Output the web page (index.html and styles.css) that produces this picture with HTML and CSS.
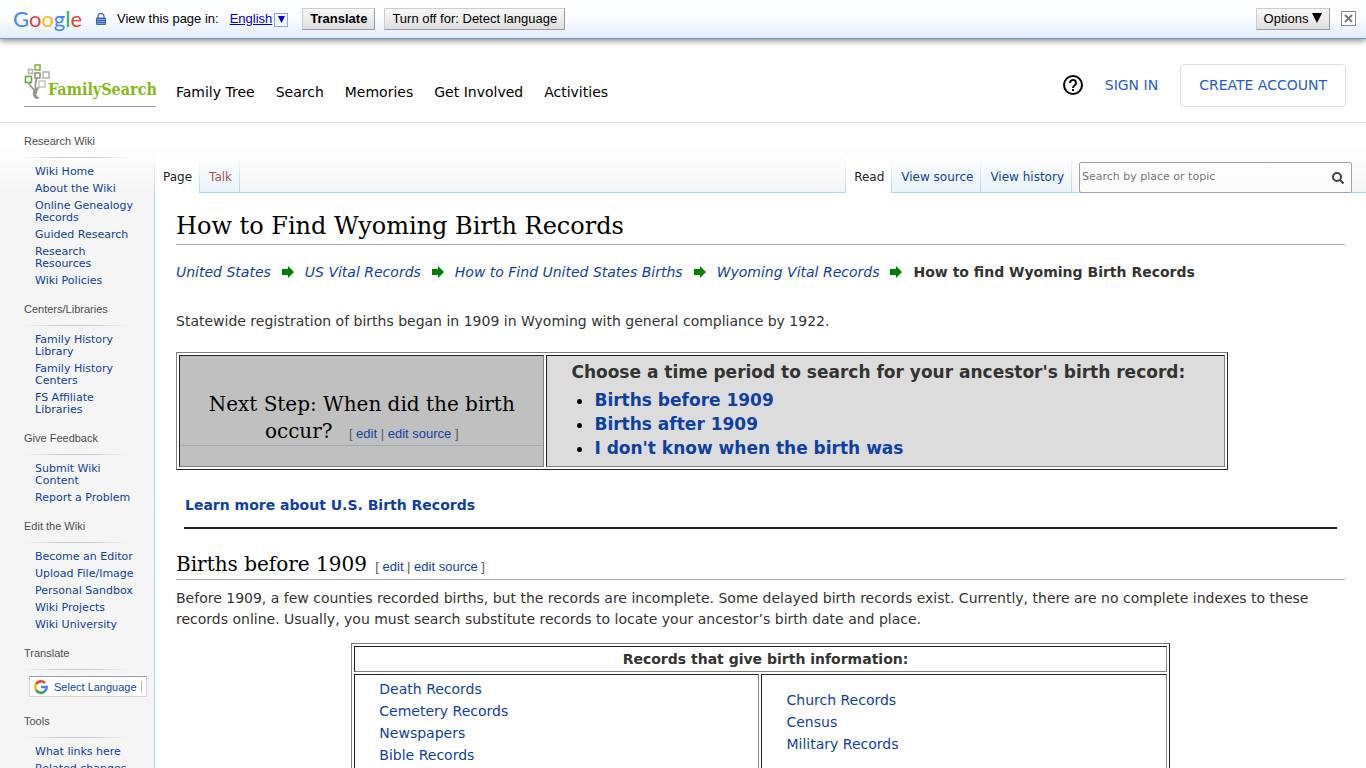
FILE: index.html
```html
<!DOCTYPE html>
<html lang="en">
<head>
    <meta charset="UTF-8">
    <meta name="viewport" content="width=device-width, initial-scale=1.0">
    <title>How to Find Wyoming Birth Records - FamilySearch Wiki</title>
    <link rel="stylesheet" href="styles.css">
</head>
<body>
    <!-- Translate toolbar -->
    <div class="translate-bar">
        <span class="google"><span class="g-blue">G</span><span class="g-red">o</span><span class="g-yellow">o</span><span class="g-blue">g</span><span class="g-green">l</span><span class="g-red">e</span></span>
        <svg class="lock" width="10" height="12" viewBox="0 0 10 12"><path d="M2 5V3.500a3 3 0 0 1 6 0V5" fill="none" stroke="#5b7db8" stroke-width="1.500"/><rect y="4.500" width="10" height="7.500" rx="1" fill="#3c68b0"/><path d="M1 6.500h8M1 8.500h8M1 10.500h8" stroke="#8fb0e0" stroke-width=".8"/></svg>
        <span class="view-label">View this page in:</span>
        <a class="language" href="#">English</a>
        <button class="language-arrow" aria-label="Choose language"><svg width="7" height="7" viewBox="0 0 7 7"><path d="M0 0h7L3.500 7z" fill="#0000cc"/></svg></button>
        <button class="bar-button translate">Translate</button>
        <button class="bar-button">Turn off for: Detect language</button>
        <button class="bar-button options">Options <svg width="10" height="10" viewBox="0 0 10 10"><path d="M0 0h10L5 10z" fill="#000"/></svg></button>
        <button class="close" aria-label="Close"><svg width="9" height="9" viewBox="0 0 9 9"><path d="M1 1l7 7M8 1L1 8" stroke="#777" stroke-width="2"/></svg></button>
    </div>

    <div class="header">
        <a class="logo" href="#">
            <svg width="132" height="38" viewBox="0 0 132 38" role="img" aria-label="FamilySearch">
                <g fill="none" stroke-width="1.600">
                    <path d="M5 19c0 4 6 5 6.500 10M13 14c-2 4-2 8-1 12M18 22c-3 0-6 3-6 8" stroke="#97928c" stroke-width="1.800"/>
                    <path d="M10 27c1 3 1 6 5 7h-3c-3-2-3-4-2-7z" fill="#97928c" stroke="#97928c"/>
                    <rect x="11" y="1" width="5" height="5" stroke="#8ab53e"/>
                    <rect x="4.500" y="5.500" width="4" height="4" stroke="#b5b3b0"/>
                    <rect x="11" y="9" width="5" height="5" fill="#fff" stroke="#97928c"/>
                    <rect x="19" y="8" width="6" height="6" stroke="#b5b3b0"/>
                    <rect x="1.500" y="12.500" width="6" height="6" fill="#fff" stroke="#6da544"/>
                    <rect x="15" y="17" width="6" height="6" fill="#fff" stroke="#c9c7c5"/>
                </g>
                <text x="24" y="31" class="logo-text">FamilySearch</text>
            </svg>
        </a>
        <nav class="main-nav">
            <a href="#">Family Tree</a>
            <a href="#">Search</a>
            <a href="#">Memories</a>
            <a href="#">Get Involved</a>
            <a href="#">Activities</a>
        </nav>
        <div class="account">
            <button class="help" aria-label="Help"><svg width="20" height="20" viewBox="0 0 20 20"><circle cx="10" cy="10" r="9" fill="none" stroke="#000" stroke-width="2"/><path d="M7 8a3 3 0 1 1 4.800 2.300C10.700 11.100 10 11.600 10 13" fill="none" stroke="#000" stroke-width="1.900"/><rect x="9" y="14" width="2" height="2"/></svg></button>
            <a class="sign-in" href="#">SIGN IN</a>
            <a class="create" href="#">CREATE ACCOUNT</a>
        </div>
    </div>

    <div class="page">
        <div class="sidebar">
            <h3>Research Wiki</h3>
            <ul>
                <li><a href="#">Wiki Home</a></li>
                <li><a href="#">About the Wiki</a></li>
                <li><a href="#">Online Genealogy Records</a></li>
                <li><a href="#">Guided Research</a></li>
                <li><a href="#">Research<br>Resources</a></li>
                <li><a href="#">Wiki Policies</a></li>
            </ul>
            <h3>Centers/Libraries</h3>
            <ul>
                <li><a href="#">Family History Library</a></li>
                <li><a href="#">Family History Centers</a></li>
                <li><a href="#">FS Affiliate Libraries</a></li>
            </ul>
            <h3>Give Feedback</h3>
            <ul>
                <li><a href="#">Submit Wiki Content</a></li>
                <li><a href="#">Report a Problem</a></li>
            </ul>
            <h3>Edit the Wiki</h3>
            <ul>
                <li><a href="#">Become an Editor</a></li>
                <li><a href="#">Upload File/Image</a></li>
                <li><a href="#">Personal Sandbox</a></li>
                <li><a href="#">Wiki Projects</a></li>
                <li><a href="#">Wiki University</a></li>
            </ul>
            <h3>Translate</h3>
            <a class="select-language" href="#">
                <svg width="14" height="14" viewBox="0 0 14 14" fill="none" stroke-width="2.600"><path d="M2 4.200A5.700 5.700 0 0 1 11 3" stroke="#ea4335"/><path d="M2 9.800A5.700 5.700 0 0 1 2 4.200" stroke="#fbbc05"/><path d="M11 11.100A5.700 5.700 0 0 1 2 9.800" stroke="#34a853"/><path d="M7 7h5.700A5.700 5.700 0 0 1 10.800 11.200" stroke="#4285f4"/></svg>
                <span>Select Language</span>
            </a>
            <h3>Tools</h3>
            <ul>
                <li><a href="#">What links here</a></li>
                <li><a href="#">Related changes</a></li>
            </ul>
        </div>

        <div class="main">
            <div class="tabs">
                <a class="tab active" href="#">Page</a>
                <a class="tab new" href="#">Talk</a>
                <a class="tab active views" href="#">Read</a>
                <a class="tab" href="#">View source</a>
                <a class="tab" href="#">View history</a>
                <form class="search">
                    <input type="search" placeholder="Search by place or topic" aria-label="Search by place or topic">
                    <button type="button" aria-label="Search"><svg width="12" height="12" viewBox="0 0 12 12" fill="none" stroke="#444" stroke-width="2"><circle cx="5" cy="5" r="4"/><path d="M8 8l3.500 3.500"/></svg></button>
                </form>
            </div>

            <div class="content">
                <h1>How to Find Wyoming Birth Records</h1>
                <div class="breadcrumb">
                    <a href="#">United States</a>
                    <svg width="12" height="12" viewBox="0 0 12 12"><path d="M0 3h6V0l6 6-6 6V9H0z" fill="#008000"/></svg>
                    <a href="#">US Vital Records</a>
                    <svg width="12" height="12" viewBox="0 0 12 12"><path d="M0 3h6V0l6 6-6 6V9H0z" fill="#008000"/></svg>
                    <a href="#">How to Find United States Births</a>
                    <svg width="12" height="12" viewBox="0 0 12 12"><path d="M0 3h6V0l6 6-6 6V9H0z" fill="#008000"/></svg>
                    <a href="#">Wyoming Vital Records</a>
                    <svg width="12" height="12" viewBox="0 0 12 12"><path d="M0 3h6V0l6 6-6 6V9H0z" fill="#008000"/></svg>
                    <b>How to find Wyoming Birth Records</b>
                </div>
                <p class="intro">Statewide registration of births began in 1909 in Wyoming with general compliance by 1922.</p>

                <table class="next-step">
                    <tr>
                        <td class="question">
                            <h2>Next Step: When did the birth occur? <span class="edit">[ <a href="#">edit</a> | <a href="#">edit source</a> ]</span></h2>
                        </td>
                        <td class="choices">
                            <b>Choose a time period to search for your ancestor's birth record:</b>
                            <ul>
                                <li><a href="#">Births before 1909</a></li>
                                <li><a href="#">Births after 1909</a></li>
                                <li><a href="#">I don't know when the birth was</a></li>
                            </ul>
                        </td>
                    </tr>
                </table>

                <div class="learn-more"><a href="#">Learn more about U.S. Birth Records</a></div>

                <h2>Births before 1909 <span class="edit">[ <a href="#">edit</a> | <a href="#">edit source</a> ]</span></h2>
                <p>Before 1909, a few counties recorded births, but the records are incomplete. Some delayed birth records exist. Currently, there are no complete indexes to these records online. Usually, you must search substitute records to locate your ancestor’s birth date and place.</p>

                <table class="records">
                    <tr>
                        <th colspan="2">Records that give birth information:</th>
                    </tr>
                    <tr>
                        <td>
                            <ul>
                                <li><a href="#">Death Records</a></li>
                                <li><a href="#">Cemetery Records</a></li>
                                <li><a href="#">Newspapers</a></li>
                                <li><a href="#">Bible Records</a></li>
                            </ul>
                        </td>
                        <td>
                            <ul>
                                <li><a href="#">Church Records</a></li>
                                <li><a href="#">Census</a></li>
                                <li><a href="#">Military Records</a></li>
                            </ul>
                        </td>
                    </tr>
                </table>
            </div>
        </div>
    </div>
</body>
</html>
```
FILE: styles.css
```css
* {
    box-sizing: border-box;
}
html {
    height: 100%;
    overflow: hidden;
}
body {
    height: 100%;
    margin: 0;
    overflow: hidden;
    font-family: Verdana, "DejaVu Sans", sans-serif;
    font-size: 14px;
    color: #333331;
    background: #fff;
}
a {
    color: #0f3fa0;
    text-decoration: none;
}
button {
    cursor: pointer;
}
ul {
    margin: 0;
    padding: 0;
    list-style: none;
}

/* translate toolbar */
.translate-bar {
    display: flex;
    align-items: center;
    height: 39px;
    padding: 0 10px 1px 13px;
    border-bottom: 1px solid #6b90da;
    background: linear-gradient(#fff, #fafcff 50%, #e3ecfa);
    box-shadow: 0 2px 6px rgba(0, 0, 0, 0.45);
    font-family: Arial, "Liberation Sans", sans-serif;
    font-size: 13px;
    color: #000;
}
.google {
    width: 83px;
    font-family: Lato, sans-serif;
    font-size: 22px;
    line-height: 24px;
}
.g-blue { color: #4285f4; }
.g-red { color: #ea4335; }
.g-yellow { color: #fbbc05; }
.g-green { color: #34a853; }
.view-label {
    margin: 0 11px;
}
.language {
    color: #0000cc;
    text-decoration: underline;
}
.language-arrow {
    display: flex;
    align-items: center;
    justify-content: center;
    width: 14px;
    height: 14px;
    margin: 2px 14px 0 2px;
    padding: 0;
    border: 1px solid #8ca6d8;
    background: #f2f6ff;
}
.bar-button {
    height: 22px;
    margin-right: 9px;
    padding: 0 7px;
    border: 1px solid #999;
    border-top-color: #ccc;
    border-left-color: #ccc;
    background: linear-gradient(#f8f8f8, #dedede);
    font: 13px Arial, "Liberation Sans", sans-serif;
    color: #000;
}
.translate {
    font-weight: bold;
}
.options {
    margin-left: auto;
    margin-right: 11px;
}
.close {
    display: flex;
    align-items: center;
    justify-content: center;
    width: 15px;
    height: 15px;
    padding: 0;
    border: 1px solid #888;
    background: #fff;
}

/* site header */
.header {
    display: flex;
    height: 84px;
    padding: 0 20px 0 24px;
    border-bottom: 1px solid #dfdfe0;
}
.logo {
    align-self: center;
    height: 43px;
    margin-right: 20px;
    margin-top: 9px;
    border-bottom: 1px solid #999;
}
.logo-text {
    font-family: "DejaVu Serif Condensed", "DejaVu Serif", serif;
    font-size: 16px;
    font-weight: bold;
    fill: #87b91a;
}
.main-nav {
    display: flex;
    align-items: center;
    gap: 21px;
    padding-top: 22px;
}
.main-nav a {
    color: #000;
}
.account {
    display: flex;
    align-items: center;
    margin-left: auto;
    padding-top: 9px;
}
.help {
    display: flex;
    margin-right: 22px;
    padding: 0;
    border: 0;
    background: none;
}
.sign-in, .create {
    color: #1f5ccc;
}
.create {
    margin-left: 22px;
    padding: 12px 18px;
    border: 1px solid #dfdfe0;
    border-radius: 4px;
    line-height: 17px;
}

/* page */
.page {
    display: flex;
    background: linear-gradient(#fff 20px, #f5f5f5 70px);
}
.sidebar {
    width: 154px;
    flex-shrink: 0;
    padding: 10px 0 0 24px;
    font-size: 11px;
    line-height: 12px;
}
.sidebar h3 {
    margin: 0 26px 8px 0;
    padding-bottom: 8px;
    background: linear-gradient(to right, transparent, #c8ccd1 33%, #c8ccd1 66%, transparent) bottom / 100% 1px no-repeat;
    font: 11px/17px Arial, "Liberation Sans", sans-serif;
    color: #4d4d4d;
}
.sidebar ul {
    margin: 0 16px 14px 11px;
}
.sidebar li + li {
    margin-top: 5px;
}
.select-language {
    display: flex;
    align-items: center;
    gap: 6px;
    height: 21px;
    margin: -2px 7px 16px 5px;
    padding-left: 4px;
    border: 1px solid #d5d5d5;
    border-top-color: #9b9b9b;
    background: #fff;
    font-family: Arial, "Liberation Sans", sans-serif;
}
.select-language span {
    padding-right: 4px;
    border-right: 1px solid #bbb;
}
.main {
    flex: 1;
    min-width: 0;
}
.tabs {
    display: flex;
    align-items: flex-end;
    height: 70px;
    padding-right: 14px;
    border-bottom: 1px solid #a7d7f9;
    font-size: 12px;
}
.tab {
    height: 35px;
    padding: 12px 8px 0 9px;
    line-height: 17px;
    background: linear-gradient(rgba(167, 215, 249, 0), #a7d7f9) right / 1px 100% no-repeat, linear-gradient(#fff, #e8f2f8);
}
.tab.active {
    height: 36px;
    margin-bottom: -1px;
    background: linear-gradient(rgba(167, 215, 249, 0), #a7d7f9) left / 1px 100% no-repeat, linear-gradient(rgba(167, 215, 249, 0), #a7d7f9) right / 1px 100% no-repeat, #fff;
    color: #222;
}
.tab.new {
    color: #a55858;
}
.tab.views {
    margin-left: auto;
}
.search {
    display: flex;
    width: 273px;
    height: 31px;
    margin: 0 0 -1px 7px;
    border: 1px solid #a2a2a2;
    border-radius: 2px;
    background: linear-gradient(#fff, #fafafa);
}
.search input {
    flex: 1;
    min-width: 0;
    padding: 0 2px 2px;
    border: 0;
    outline: 0;
    background: none;
    font: 11px/17px Verdana, "DejaVu Sans", sans-serif;
}
.search input::placeholder {
    color: #777;
}
.search button {
    width: 26px;
    padding: 0;
    border: 0;
    background: none;
}
.search svg {
    display: block;
    margin: auto;
}
.content {
    padding: 16px 21px 0;
    border-left: 1px solid #a7d7f9;
    background: #fff;
}
h1, h2 {
    font-family: "Museo Slab", "DejaVu Serif", serif;
    font-weight: normal;
    color: #000;
    border-bottom: 1px solid #a2a9b1;
}
h1 {
    margin: 0;
    font-size: 24px;
    line-height: 35px;
}
h2 {
    margin: 20px 0 8px;
    font-size: 20px;
    line-height: 30px;
}
.edit {
    margin-left: 2px;
    font: 13px Arial, "Liberation Sans", sans-serif;
    color: #54595d;
}
p {
    margin: 0;
    line-height: 21px;
}
.breadcrumb {
    display: flex;
    align-items: center;
    gap: 11px;
    margin-top: 16px;
    line-height: 22px;
}
.breadcrumb a {
    font-style: italic;
}
.intro {
    margin: 28px 0 20px;
}
table {
    border: 1px solid #222;
    border-top-color: #808080;
    border-left-color: #808080;
    border-spacing: 2px;
}
td, th {
    border: 1px solid #808080;
    border-top-color: #222;
    border-left-color: #222;
    padding: 0;
}
.next-step {
    width: 90%;
    font-size: 17px;
}
.question {
    width: 35%;
    background: #c0c0c0;
    text-align: center;
}
.question h2 {
    margin: 14px 0 0;
    line-height: 27px;
}
.question .edit {
    margin-left: 10px;
}
.choices {
    padding: 4px 24px 6px;
    background: #dcdcdc;
    line-height: 24px;
}
.choices ul {
    margin-top: 4px;
    padding-left: 23px;
    list-style: disc;
    font-weight: bold;
}
.choices li::marker {
    color: #000;
}
.learn-more {
    margin: 20px 8px 0;
    padding: 5px 1px 11px;
    border-bottom: 2px solid #222;
    font-weight: bold;
    line-height: 21px;
}
.records {
    width: 70%;
    margin: 13px auto 0;
}
.records th {
    padding-left: 10px;
    line-height: 24px;
}
.records td {
    width: 50%;
    padding: 3px 24px 5px;
    line-height: 22px;
}
```
